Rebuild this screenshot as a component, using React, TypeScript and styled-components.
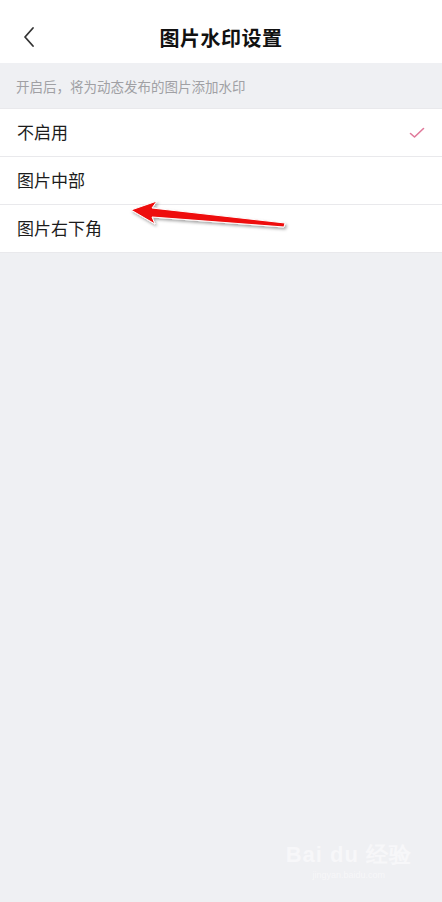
import { FC } from "react";
import styled, { createGlobalStyle } from "styled-components";

const GlobalStyle = createGlobalStyle`
  html, body {
    margin: 0;
    padding: 0;
    background: #eff0f3;
  }
  body {
    font-family: "Noto Sans CJK SC", "Noto Sans", sans-serif;
  }
`;

const Page = styled.div`
  position: relative;
  width: 442px;
  height: 902px;
  background: #eff0f3;
  overflow: hidden;
`;

const Header = styled.div`
  height: 63px;
  background: #fff;
  display: flex;
  align-items: center;
  justify-content: center;
  position: relative;
`;

const BackButton = styled.button`
  position: absolute;
  left: 18px;
  top: 22px;
  width: 22px;
  height: 30px;
  padding: 0;
  border: none;
  background: none;
  display: flex;
  align-items: center;
  justify-content: center;
`;

const Title = styled.h1`
  margin: 0;
  margin-top: 11px;
  font-size: 20px;
  font-weight: 700;
  color: #111;
  letter-spacing: 0.5px;
`;

const Hint = styled.div`
  height: 45px;
  display: flex;
  align-items: center;
  padding-left: 16px;
  font-size: 13.5px;
  color: #a0a0a4;
`;

const List = styled.ul`
  margin: 0;
  padding: 0;
  list-style: none;
  background: #fff;
`;

const Row = styled.li`
  height: 47px;
  display: flex;
  align-items: center;
  justify-content: space-between;
  padding: 0 17px;
  border-top: 1px solid #e9e9ec;
  &:last-child {
    border-bottom: 1px solid #e9e9ec;
  }
`;

const Label = styled.span`
  font-size: 17px;
  color: #1c1c1c;
  margin-top: -2px;
`;

const Watermark = styled.div`
  position: absolute;
  right: 30px;
  bottom: 22px;
  display: flex;
  flex-direction: column;
  align-items: center;
  color: #f7f7f9;
  font-family: "Liberation Sans", sans-serif;
  .wm-top {
    font-size: 22px;
    font-weight: 700;
    letter-spacing: 1px;
  }
  .wm-bottom {
    font-size: 9px;
  }
`;

const Annotation = styled.svg`
  position: absolute;
  left: 0;
  top: 0;
  pointer-events: none;
`;

const options = ["不启用", "图片中部", "图片右下角"];

const App: FC = () => {
  const selected = "不启用";
  return (
    <Page>
      <GlobalStyle />
      <Header>
        <BackButton>
          <svg width="14" height="22" viewBox="0 0 14 22">
            <path
              d="M11 2 L3 11 L11 20"
              fill="none"
              stroke="#333"
              strokeWidth="1.8"
              strokeLinecap="round"
              strokeLinejoin="round"
            />
          </svg>
        </BackButton>
        <Title>图片水印设置</Title>
      </Header>
      <Hint>开启后，将为动态发布的图片添加水印</Hint>
      <List>
        {options.map((option) => (
          <Row key={option}>
            <Label>{option}</Label>
            {option === selected && (
              <svg width="16" height="12" viewBox="0 0 16 12">
                <path
                  d="M1.5 6.5 L5.5 10 L14.5 1.5"
                  fill="none"
                  stroke="#e0799a"
                  strokeWidth="1.6"
                  strokeLinecap="round"
                  strokeLinejoin="round"
                />
              </svg>
            )}
          </Row>
        ))}
      </List>
      <Annotation width="442" height="902">
        <defs>
          <filter id="shadow" x="-20%" y="-50%" width="140%" height="200%">
            <feDropShadow dx="1.5" dy="2" stdDeviation="1.5" floodColor="#000" floodOpacity="0.35" />
          </filter>
        </defs>
        <path
          d="M131 210 L157 201 L152 208 L285 223 L284 227 L152 217 L155 224 Z"
          fill="#ee1111"
          stroke="#fff"
          strokeWidth="1"
          strokeLinejoin="round"
          filter="url(#shadow)"
        />
      </Annotation>
      <Watermark>
        <span className="wm-top">Bai du 经验</span>
        <span className="wm-bottom">jingyan.baidu.com</span>
      </Watermark>
    </Page>
  );
};

export default App;
